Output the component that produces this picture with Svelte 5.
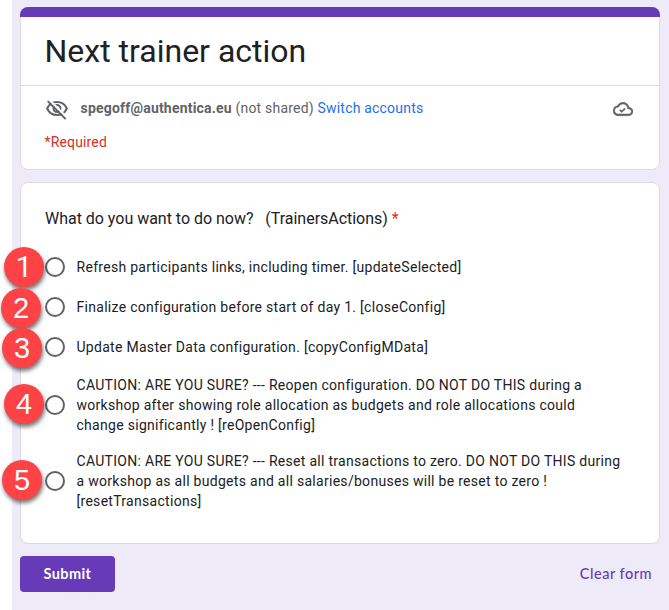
<script>
  const options = [
    { lines: ['Refresh participants links, including timer. [updateSelected]'], x: 24, y: 0 },
    { lines: ['Finalize configuration before start of day 1. [closeConfig]'], x: 21, y: 1 },
    { lines: ['Update Master Data configuration. [copyConfigMData]'], x: 22, y: 1 },
    {
      lines: [
        'CAUTION: ARE YOU SURE? --- Reopen configuration. DO NOT DO THIS during a',
        'workshop after showing role allocation as budgets and role allocations could',
        'change significantly ! [reOpenConfig]'
      ],
      x: 24,
      y: -1
    },
    {
      lines: [
        'CAUTION: ARE YOU SURE? --- Reset all transactions to zero. DO NOT DO THIS during',
        'a workshop as all budgets and all salaries/bonuses will be reset to zero !',
        '[resetTransactions]'
      ],
      x: 22,
      y: -1
    }
  ];
</script>

<div class="page">
  <section class="card header">
    <div class="bar"></div>
    <h1>Next trainer action</h1>
    <div class="account">
      <svg class="eye" viewBox="0 0 24 24" width="24" height="24" fill="none" stroke="#5f6368" stroke-width="2">
        <path d="M2.200 11.500C3.900 7.500 7.700 5 12 5s8.100 2.500 9.800 6.500C20.100 15.500 16.300 18 12 18S3.900 15.500 2.200 11.500z" />
        <circle cx="12" cy="11.500" r="3.500" />
        <path d="M4.200 2.800L22.200 20.800" stroke="#fff" />
        <path d="M2.700 4.100L20.700 22.100" />
      </svg>
      <p><strong>spegoff@authentica.eu</strong>{' '}<span class="shared">(not shared)</span>{' '}<span class="link">Switch accounts</span></p>
      <svg class="cloud" viewBox="0 0 24 24" width="20" height="20" fill="#5f6368" stroke="#5f6368" stroke-width="0.6">
        <path d="M19.350 10.040C18.670 6.590 15.640 4 12 4 9.110 4 6.600 5.640 5.350 8.040 2.340 8.360 0 10.910 0 14c0 3.310 2.690 6 6 6h13c2.760 0 5-2.240 5-5 0-2.640-2.050-4.780-4.650-4.960zM19 18H6c-2.210 0-4-1.790-4-4 0-2.050 1.530-3.760 3.560-3.970l1.070-.11.500-.950C8.080 7.140 9.940 6 12 6c2.620 0 4.880 1.860 5.390 4.430l.300 1.500 1.530.110C20.780 12.140 22 13.450 22 15c0 1.650-1.350 3-3 3zm-8.400-3.820-1.600-1.600L7.800 13.800 10.600 16.300l4.400-4.400-1.200-1.200z" />
      </svg>
    </div>
    <div class="required">*Required</div>
  </section>

  <section class="card question">
    <h2>What do you want to do now?&nbsp;&nbsp; (TrainersActions) <span>*</span></h2>
    <div class="options">
      {#each options as option, i}
        <div class="option">
          <span class="radio"></span>
          <div class="label">
            {#each option.lines as line}<div>{line}</div>{/each}
          </div>
          <span class="badge" class:first={i === 0} style="left: {option.x - 65}px; top: calc(50% + {option.y - 20}px)">{i + 1}</span>
        </div>
      {/each}
    </div>
  </section>

  <footer>
    <button class="submit">Submit</button>
    <span class="clear">Clear form</span>
  </footer>
</div>

<style>
  :global(body) { background: #fff; }
  .page {
    box-sizing: border-box;
    height: 610px;
    margin-left: 12px;
    padding: 7px 9px 0 8px;
    background: #eeeaf8;
    font: 14px/20px Roboto, sans-serif;
    color: #202124;
  }
  .card {
    box-sizing: border-box;
    border: 1px solid #dadce0;
    border-radius: 8px;
    background: #fff;
  }
  .header { height: 163px; }
  .bar {
    height: 10px;
    margin: -1px -1px 0;
    border-radius: 8px 8px 0 0;
    background: #673ab7;
  }
  h1 {
    box-sizing: border-box;
    height: 69px;
    margin: 0;
    padding: 14px 23.500px 0;
    border-bottom: 1px solid #dadce0;
    font-size: 32px;
    font-weight: 400;
    line-height: 40px;
    white-space: nowrap;
  }
  .account {
    display: flex;
    align-items: center;
    height: 24px;
    margin: 10px 26px 0 24px;
    color: #5f6368;
    letter-spacing: 0.2px;
  }
  .account p {
    flex: 1;
    margin: 0 0 0 11.500px;
    white-space: nowrap;
  }
  .account strong { font-weight: 700; }
  .link { color: #1a73e8; }
  .eye { margin-top: 2px; }
  .cloud { margin-top: 2px; }
  .required {
    margin: 12px 23.500px 0;
    color: #d93025;
    letter-spacing: 0.15px;
  }
  .question {
    height: 362px;
    margin-top: 12px;
    padding: 24px 24px 0;
  }
  h2 {
    margin: 0;
    font-size: 16px;
    font-weight: 400;
    line-height: 24px;
    letter-spacing: -0.02px;
    white-space: nowrap;
  }
  h2 span { color: #d93025; }
  .options {
    display: flex;
    flex-direction: column;
    gap: 16px;
    margin-top: 24px;
  }
  .option {
    position: relative;
    display: flex;
    align-items: center;
    min-height: 24px;
  }
  .radio {
    box-sizing: border-box;
    flex: none;
    width: 20px;
    height: 20px;
    border: 2px solid #5f6368;
    border-radius: 50%;
  }
  .label {
    margin-left: 11.500px;
    letter-spacing: 0.29px;
    white-space: nowrap;
  }
  .badge {
    position: absolute;
    width: 40px;
    height: 40px;
    border-radius: 50%;
    background: #fd4345;
    box-shadow: 1px 3px 4px rgba(0, 0, 0, 0.55);
    color: #fff;
    font: 29px/41px "Liberation Sans", Arial, sans-serif;
    text-align: center;
  }
  /* Roboto's numeral one has no foot */
  .first { font-family: Roboto, sans-serif; }
  footer {
    display: flex;
    justify-content: space-between;
    align-items: center;
    height: 36px;
    margin-top: 12px;
    padding-right: 8px;
  }
  .submit {
    width: 95px;
    height: 36px;
    padding: 0;
    border: 0;
    border-radius: 4px;
    background: #673ab7;
    color: #fff;
    font: 700 14.500px/20px Lato, sans-serif;
    letter-spacing: 0.4px;
  }
  .clear {
    color: #673ab7;
    font: 500 14.500px/20px Lato, sans-serif;
    letter-spacing: 0.5px;
  }
</style>
